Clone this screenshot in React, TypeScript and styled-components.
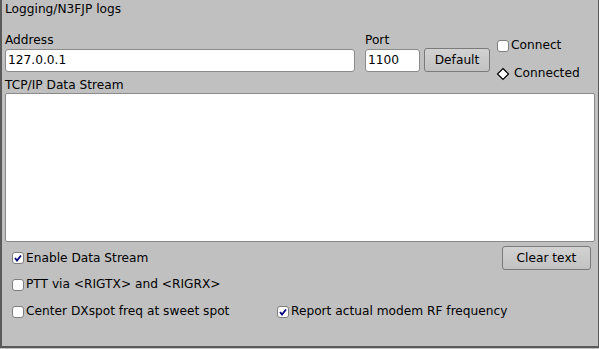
import { FC } from "react";
import styled, { createGlobalStyle } from "styled-components";

const GlobalStyle = createGlobalStyle`
  html, body {
    margin: 0;
    padding: 0;
    background: #c0c0c0;
  }
  body {
    font-family: "DejaVu Sans", "Liberation Sans", sans-serif;
    font-size: 12.2px;
    color: #000;
  }
`;

const Frame = styled.div`
  box-sizing: border-box;
  width: 599px;
  height: 348px;
  border-left: 2px solid #5a5a5a;
  border-right: 1px solid #5a5a5a;
  border-bottom: 2px solid #5a5a5a;
  padding-left: 3px;
  display: flex;
  flex-direction: column;
`;

const Title = styled.div`
  height: 18px;
  line-height: 18px;
`;

const Top = styled.div`
  display: flex;
  margin-top: 14px;
`;

const LeftPart = styled.div`
  display: flex;
  flex-direction: column;
`;

const Fields = styled.div`
  display: flex;
  align-items: flex-end;
`;

const Field = styled.div<{ $w: number; $ml?: number }>`
  display: flex;
  flex-direction: column;
  width: ${(p) => p.$w}px;
  margin-left: ${(p) => p.$ml ?? 0}px;
`;

const Label = styled.div`
  height: 17px;
  line-height: 17px;
`;

const Input = styled.div`
  box-sizing: border-box;
  height: 23px;
  background: #fff;
  border: 1px solid #8a8a8a;
  border-radius: 3px;
  padding-left: 2px;
  line-height: 21px;
  white-space: nowrap;
  overflow: hidden;
`;

const Button = styled.div<{ $w: number; $h: number; $mr?: number }>`
  box-sizing: border-box;
  width: ${(p) => p.$w}px;
  height: ${(p) => p.$h}px;
  margin-right: ${(p) => p.$mr ?? 0}px;
  border: 1px solid #7a7a7a;
  border-radius: 3px;
  background: linear-gradient(#d2d2d2, #c2c2c2);
  display: flex;
  align-items: center;
  justify-content: center;
`;

const StreamLabel = styled.div`
  margin-top: 5px;
  height: 16px;
  line-height: 16px;
`;

const RightPart = styled.div`
  display: flex;
  flex-direction: column;
  margin-left: 7px;
  padding-top: 5px;
  gap: 11px;
`;

const Check = styled.label<{ $w?: number }>`
  display: flex;
  align-items: center;
  height: 17px;
  line-height: 17px;
  width: ${(p) => (p.$w ? `${p.$w}px` : "auto")};
  white-space: nowrap;
`;

const Box = styled.span`
  box-sizing: border-box;
  width: 12px;
  height: 12px;
  background: #fff;
  border: 1px solid #7e7e7e;
  border-radius: 3px;
  margin-right: 2px;
  display: flex;
  align-items: center;
  justify-content: center;
`;

const Diamond = styled.svg`
  width: 14px;
  height: 14px;
  margin-left: -1px;
  margin-right: 4px;
`;

const TextArea = styled.div`
  box-sizing: border-box;
  width: 590px;
  height: 149px;
  background: #fff;
  border: 1px solid #8a8a8a;
  border-radius: 2px;
`;

const Row = styled.div<{ $mt: number }>`
  display: flex;
  align-items: center;
  margin-top: ${(p) => p.$mt}px;
  padding-left: 7px;
`;

const Spacer = styled.div`
  flex: 1;
`;

const Tick = () => (
  <svg width="8" height="8" viewBox="0 0 8 8">
    <path d="M1 4 L3 6.5 L7 1.5" fill="none" stroke="#00007a" strokeWidth="1.8" />
  </svg>
);

const CheckBox: FC<{ label: string; checked?: boolean; w?: number }> = ({ label, checked, w }) => (
  <Check $w={w}>
    <Box>{checked && <Tick />}</Box>
    {label}
  </Check>
);

const App: FC = () => (
  <>
    <GlobalStyle />
    <Frame>
      <Title>Logging/N3FJP logs</Title>
      <Top>
        <LeftPart>
          <Fields>
            <Field $w={350}>
              <Label>Address</Label>
              <Input>127.0.0.1</Input>
            </Field>
            <Field $w={55} $ml={10}>
              <Label>Port</Label>
              <Input>1100</Input>
            </Field>
            <Field $w={66} $ml={4}>
              <Button $w={66} $h={24}>Default</Button>
            </Field>
          </Fields>
          <StreamLabel>TCP/IP Data Stream</StreamLabel>
        </LeftPart>
        <RightPart>
          <CheckBox label="Connect" />
          <Check>
            <Diamond viewBox="0 0 14 14">
              <path d="M7 1.5 L12.5 7 L7 12.5 L1.5 7 Z" fill="#fff" stroke="#000" strokeWidth="1.2" />
            </Diamond>
            Connected
          </Check>
        </RightPart>
      </Top>
      <TextArea />
      <Row $mt={4}>
        <CheckBox label="Enable Data Stream" checked />
        <Spacer />
        <Button $w={89} $h={24} $mr={7}>Clear text</Button>
      </Row>
      <Row $mt={6}>
        <CheckBox label="PTT via <RIGTX> and <RIGRX>" />
      </Row>
      <Row $mt={10}>
        <CheckBox label="Center DXspot freq at sweet spot" w={265} />
        <CheckBox label="Report actual modem RF frequency" checked />
      </Row>
    </Frame>
  </>
);

export default App;
